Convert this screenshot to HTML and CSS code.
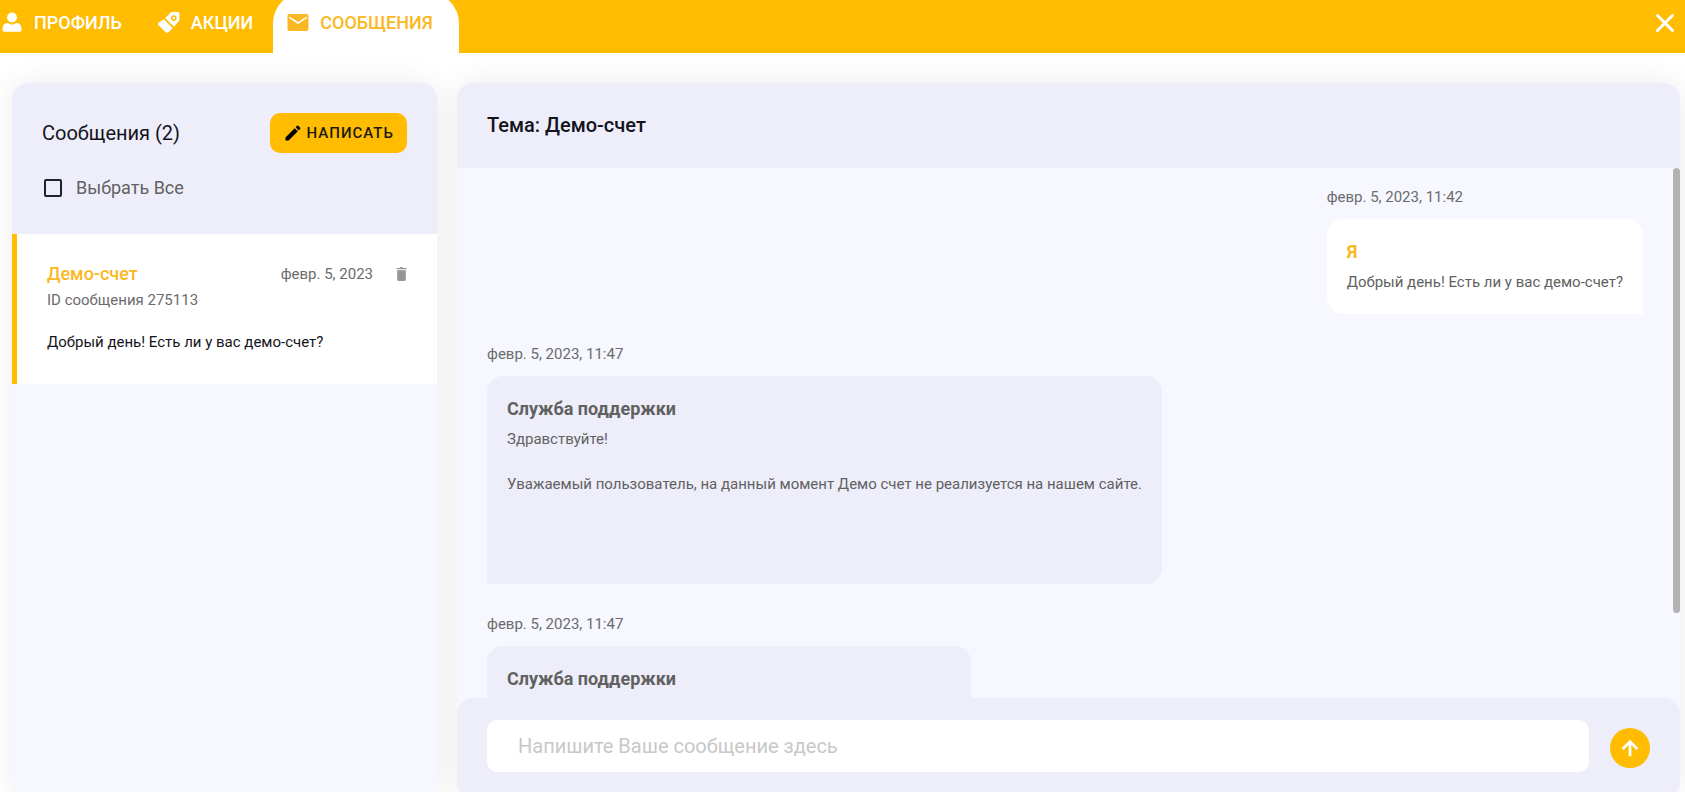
FILE: index.html
```html
<!DOCTYPE html>
<html lang="ru">
<head>
  <meta charset="UTF-8" />
  <meta name="viewport" content="width=device-width, initial-scale=1.0" />
  <title>Сообщения</title>
  <link rel="stylesheet" href="styles.css">
</head>
<body>
  <header class="topbar">
    <nav class="tabs">
      <a href="#profile" class="tab">
        <svg class="icon" viewBox="0 0 24 24"><circle cx="12" cy="7.500" r="5"/><path d="M2.500 20v-1.500c0-3.500 2.500-5.500 5.500-5.500 1 .9 2.400 1.500 4 1.500s3-.6 4-1.500c3 0 5.500 2 5.500 5.500V20c0 1-.7 1.700-1.700 1.700H4.200c-1 0-1.700-.7-1.700-1.700z"/></svg>
        <span>ПРОФИЛЬ</span>
      </a>
      <a href="#promo" class="tab">
        <svg class="icon" viewBox="0 0 24 24"><path fill-rule="evenodd" d="M13.500 2.800c.6-.5 1.200-.8 2-.8h5c1.300 0 2 .7 2 2v5.200c0 .8-.3 1.500-.8 2.100l-4.800 5.500-8.800-8.800zM16.800 5.300a2.800 2.800 0 1 0 0 5.600 2.800 2.800 0 0 0 0-5.600zm0 1.500a1.300 1.300 0 1 1 0 2.600 1.300 1.300 0 0 1 0-2.600z"/><path d="M6.800 9.200l8.800 8.800-3.600 4c-.9 1-2.200 1.100-3.200.2l-7-6.600c-1-1-1-2.200 0-3.100z"/></svg>
        <span>АКЦИИ</span>
      </a>
      <a href="#messages" class="tab active">
        <svg class="icon" viewBox="0 0 24 24"><path fill-rule="evenodd" d="M3.500 4h17c1.200 0 2 .8 2 2v13c0 1.200-.8 2-2 2h-17c-1.200 0-2-.8-2-2V6c0-1.200.8-2 2-2zM3.300 8.300L12 13.900l8.700-5.600V6.500L12 12 3.300 6.500z"/></svg>
        <span>СООБЩЕНИЯ</span>
      </a>
    </nav>
    <button class="close-btn" aria-label="Закрыть">
      <svg viewBox="0 0 24 24"><path d="M4.500 4.500l15 15M19.500 4.500l-15 15"/></svg>
    </button>
  </header>

  <main class="layout">
    <aside class="panel sidebar">
      <div class="sidebar-head">
        <div class="sidebar-title">
          <h2>Сообщения (2)</h2>
          <button class="write-btn">
            <svg viewBox="0 0 24 24"><path d="M3 17.250V21h3.750L17.810 9.940l-3.750-3.750L3 17.250zM20.710 7.040a1 1 0 0 0 0-1.410l-2.340-2.340a1 1 0 0 0-1.410 0l-1.830 1.830 3.750 3.750 1.830-1.830z"/></svg>
            НАПИСАТЬ
          </button>
        </div>
        <label class="select-all">
          <input type="checkbox">
          <span>Выбрать Все</span>
        </label>
      </div>

      <article class="thread">
        <div class="thread-top">
          <h3>Демо-счет</h3>
          <span class="muted">февр. 5, 2023</span>
          <button class="delete-btn" aria-label="Удалить">
            <svg viewBox="0 0 10 14"><path d="M0 1h3l.7-.8h2.600L7 1h3v1.300H0zM.7 3.200h8.600v9.300c0 .8-.6 1.400-1.400 1.400H2.100c-.8 0-1.400-.6-1.400-1.400z"/></svg>
          </button>
        </div>
        <p class="muted">ID сообщения 275113</p>
        <p class="thread-text">Добрый день! Есть ли у вас демо-счет?</p>
      </article>
    </aside>

    <section class="panel chat">
      <div class="chat-head">
        <h2>Тема: Демо-счет</h2>
      </div>

      <div class="chat-body">
        <div class="messages">
          <div class="message mine">
            <time>февр. 5, 2023, 11:42</time>
            <div class="bubble">
              <h4>Я</h4>
              <p>Добрый день! Есть ли у вас демо-счет?</p>
            </div>
          </div>

          <div class="message">
            <time>февр. 5, 2023, 11:47</time>
            <div class="bubble letter">
              <h4>Служба поддержки</h4>
              <p>Здравствуйте!</p>
              <p>Уважаемый пользователь, на данный момент Демо счет не реализуется на нашем сайте.</p>
            </div>
          </div>

          <div class="message">
            <time>февр. 5, 2023, 11:47</time>
            <div class="bubble short">
              <h4>Служба поддержки</h4>
            </div>
          </div>
        </div>
        <div class="scroll-thumb"></div>
      </div>

      <form class="composer">
        <input type="text" placeholder="Напишите Ваше сообщение здесь" aria-label="Сообщение">
        <button type="button" class="send-btn" aria-label="Отправить">
          <svg viewBox="0 0 24 24"><path d="M12 21V5M4 13l8-8 8 8"/></svg>
        </button>
      </form>
    </section>
  </main>
</body>
</html>
```
FILE: styles.css
```css
* {
  box-sizing: border-box;
}
body {
  margin: 0;
  height: 100vh;
  overflow: hidden;
  display: flex;
  flex-direction: column;
  font-family: Roboto, sans-serif;
  font-size: 15px;
  color: #616161;
  background: #fff;
}
h2, h3, h4, p {
  margin: 0;
}
h2 {
  font-size: 20px;
  line-height: 24px;
  font-weight: 500;
  color: #14141c;
}
button {
  border: none;
  padding: 0;
  background: none;
  font-family: inherit;
  cursor: pointer;
}

/* Topbar */
.topbar {
  flex: none;
  height: 53px;
  display: flex;
  align-items: center;
  justify-content: space-between;
  padding-right: 8px;
  background: #ffbc00;
  overflow: hidden;
}
.tabs {
  display: flex;
  margin-left: -15px;
  align-self: flex-end;
}
.tab {
  display: flex;
  align-items: center;
  gap: 10px;
  height: 60px;
  padding: 0 20px 2px 15px;
  border-radius: 30px 30px 0 0;
  font-size: 18px;
  font-weight: 500;
  color: #fff;
  text-decoration: none;
}
.tab.active {
  padding-left: 13px;
  padding-right: 26px;
  color: #fbb724;
  background: #fff;
}
.icon {
  width: 24px;
  height: 24px;
  fill: currentColor;
}
.close-btn svg {
  display: block;
  width: 24px;
  height: 24px;
  margin-bottom: 7px;
  fill: none;
  stroke: #fff;
  stroke-width: 3;
  stroke-linecap: round;
}

/* Panels */
.layout {
  flex: 1;
  min-height: 0;
  display: flex;
  gap: 20px;
  padding: 30px 5px 0 12px;
  margin-bottom: -6px;
}
.panel {
  display: flex;
  flex-direction: column;
  border-radius: 16px;
  background: #f6f7ff;
  box-shadow: 0 0 30px rgba(0, 0, 0, 0.08);
  overflow: hidden;
}
.sidebar {
  flex: 0 0 425px;
}
.chat {
  flex: 1;
  min-width: 0;
}

/* Sidebar */
.sidebar-head {
  height: 151px;
  padding: 30px;
  background: #eeeefa;
}
.sidebar-title {
  display: flex;
  align-items: center;
  justify-content: space-between;
}
.sidebar-title h2 {
  font-weight: 400;
}
.write-btn {
  display: flex;
  align-items: center;
  gap: 4px;
  height: 40px;
  padding: 0 13px;
  border-radius: 10px;
  font-size: 15px;
  font-weight: 500;
  letter-spacing: 1px;
  color: #1c1a10;
  background: #ffbc00;
}
.write-btn svg {
  width: 20px;
  height: 20px;
}
.select-all {
  display: flex;
  align-items: center;
  gap: 14px;
  margin: 23px 0 0 2px;
  font-size: 18px;
  line-height: 24px;
}
.select-all input {
  appearance: none;
  width: 18px;
  height: 18px;
  margin: 0;
  border: 2px solid #22222c;
  border-radius: 2px;
}
.thread {
  height: 150px;
  padding: 27px 30px;
  border-left: 5px solid #ffbc00;
  background: #fff;
}
.thread-top {
  display: flex;
  align-items: center;
  line-height: 24px;
}
.thread h3 {
  flex: 1;
  font-size: 18px;
  font-weight: 500;
  color: #fbb724;
}
.muted {
  line-height: 26px;
  color: #6b6b6b;
}
.delete-btn svg {
  display: block;
  width: 11px;
  height: 14px;
  margin-left: 23px;
  fill: #969696;
}
.thread-text {
  margin-top: 18px;
  line-height: 23px;
  color: #14141c;
}

/* Chat */
.chat-head {
  flex: none;
  height: 85px;
  padding: 30px;
  background: #eeeefa;
}
.chat-body {
  position: relative;
  flex: 1;
  min-height: 0;
  overflow: hidden;
}
.scroll-thumb {
  position: absolute;
  top: 0;
  right: 0;
  width: 7px;
  height: 84%;
  border-radius: 4px;
  background: #b4b1b4;
}
.messages {
  display: flex;
  flex-direction: column;
  align-items: flex-start;
  gap: 30px;
  padding: 19px 37px 19px 30px;
}
.message.mine {
  align-self: flex-end;
}
.message time {
  display: block;
  margin-bottom: 12px;
  line-height: 20px;
  color: #6b6b6b;
}
.bubble {
  padding: 20px;
  border-radius: 16px 16px 16px 0;
  background: #eeeefa;
}
.mine .bubble {
  border-radius: 16px 16px 0 16px;
  background: #fff;
}
.bubble h4 {
  margin-bottom: 6px;
  font-size: 18px;
  line-height: 26px;
  font-weight: 700;
}
.mine .bubble h4 {
  color: #fbb724;
}
.bubble p {
  line-height: 23px;
}
.bubble p + p {
  margin-top: 22px;
}
.letter {
  min-height: 208px;
}
.short {
  width: 484px;
  height: 134px;
}

/* Composer */
.composer {
  flex: none;
  display: flex;
  gap: 21px;
  height: 100px;
  padding: 22px 30px;
  border-radius: 16px 16px 0 0;
  background: #eeeefa;
}
.composer input {
  flex: 1;
  height: 52px;
  padding: 0 31px;
  border: none;
  border-radius: 10px;
  font-family: inherit;
  font-size: 20px;
  background: #fff;
  outline: none;
}
.composer input::placeholder {
  color: #c8c8c8;
}
.send-btn {
  display: flex;
  align-items: center;
  justify-content: center;
  width: 40px;
  height: 40px;
  margin-top: 8px;
  border-radius: 50%;
  background: #ffbc00;
}
.send-btn svg {
  width: 22px;
  height: 22px;
  fill: none;
  stroke: #fff;
  stroke-width: 3;
}
```
